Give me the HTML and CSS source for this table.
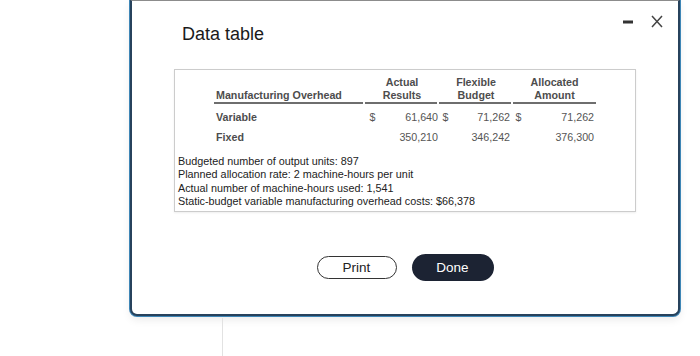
FILE: index.html
```html
<!DOCTYPE html>
<html>
<head>
<meta charset="utf-8">
<link rel="stylesheet" href="styles.css">
</head>
<body>
<div class="modal">
  <div class="modal-head">
    <h1 class="title">Data table</h1>
    <div class="controls">
      <svg class="ico-min" width="10" height="4" viewBox="0 0 10 4"><rect x="0" y="0.5" width="10" height="3" fill="#333"/></svg>
      <svg class="ico-close" width="12" height="13" viewBox="0 0 12 13"><path d="M1 1 L11 12 M11 1 L1 12" stroke="#444" stroke-width="1.5" fill="none"/></svg>
    </div>
  </div>
  <div class="data-box">
    <table class="data">
      <colgroup>
        <col class="c-label"><col class="c-dol1"><col class="c-v1"><col class="c-dol2"><col class="c-v2"><col class="c-dol3"><col class="c-v3">
      </colgroup>
      <thead>
        <tr>
          <th class="th-left">Manufacturing Overhead</th>
          <th colspan="2">Actual<br>Results</th>
          <th colspan="2">Flexible<br>Budget</th>
          <th colspan="2" class="th-last">Allocated<br>Amount</th>
        </tr>
      </thead>
      <tbody>
        <tr>
          <td class="lbl">Variable</td>
          <td class="dol">$</td>
          <td class="val v1">61,640</td>
          <td class="dol">$</td>
          <td class="val v2">71,262</td>
          <td class="dol">$</td>
          <td class="val v3">71,262</td>
        </tr>
        <tr>
          <td class="lbl">Fixed</td>
          <td class="dol"></td>
          <td class="val v1">350,210</td>
          <td class="dol"></td>
          <td class="val v2">346,242</td>
          <td class="dol"></td>
          <td class="val v3">376,300</td>
        </tr>
      </tbody>
    </table>
    <div class="notes">
      <p>Budgeted number of output units: 897</p>
      <p>Planned allocation rate: 2 machine-hours per unit</p>
      <p>Actual number of machine-hours used: 1,541</p>
      <p>Static-budget variable manufacturing overhead costs: $66,378</p>
    </div>
  </div>
  <div class="actions">
    <button class="btn btn-print">Print</button>
    <button class="btn btn-done">Done</button>
  </div>
</div>
<div class="below"></div>
</body>
</html>
```

FILE: styles.css
```css
html, body {
  margin: 0;
  padding: 0;
  background: #ffffff;
  font-family: "Liberation Sans", Arial, Helvetica, sans-serif;
}

.modal {
  box-sizing: border-box;
  margin-left: 130px;
  width: 550px;
  height: 316px;
  background: #fff;
  border: 2px solid #27425c;
  border-top: 1px solid #8c8c8c;
  border-radius: 0 0 7px 7px;
  box-shadow: 0 0 0 1px #3f86b6, 0 4px 8px rgba(0, 0, 0, 0.08);
  padding: 13px 15px 0 42px;
}

.modal-head {
  display: flex;
  justify-content: space-between;
  align-items: flex-start;
  height: 55px;
}

.title {
  margin: 9px 0 0 8px;
  font-size: 18px;
  line-height: 22px;
  font-weight: normal;
  color: #1a1a1a;
}

.controls {
  display: flex;
  align-items: center;
  gap: 18px;
  padding-top: 1px;
}

.ico-min { margin-top: 1px; }

.data-box {
  box-sizing: border-box;
  width: 462px;
  height: 143px;
  border: 1px solid #cccccc;
  box-shadow: 0 1px 2px rgba(0, 0, 0, 0.07);
  padding: 6px 0 0 3px;
}

.data {
  margin-left: 36px;
  border-collapse: collapse;
  table-layout: fixed;
  width: 382px;
  font-size: 10.7px;
  color: #555;
}

.c-label { width: 151px; }
.c-dol1 { width: 15px; }
.c-v1 { width: 59px; }
.c-dol2 { width: 13px; }
.c-v2 { width: 61px; }
.c-dol3 { width: 11px; }
.c-v3 { width: 72px; }

.data th {
  font-weight: bold;
  color: #4d4d4d;
  line-height: 13px;
  padding: 0 0 2px 0;
  vertical-align: bottom;
  text-align: center;
  white-space: nowrap;
  background: linear-gradient(#6e6e6e, #6e6e6e) no-repeat left bottom / calc(100% - 2px) 2px;
}

.data th.th-left {
  text-align: left;
  padding-left: 2px;
}

.data th.th-last {
  background-size: 100% 2px;
}

.data td {
  height: 20px;
  line-height: 20px;
  padding: 0;
  white-space: nowrap;
}

.data tbody tr:first-child td {
  padding-top: 3px;
}

.data td.lbl {
  font-weight: bold;
  color: #4d4d4d;
  padding-left: 2px;
}

.data td.dol {
  text-align: center;
}

.data td.val {
  text-align: right;
}

.data td.v1 { padding-right: 1px; }
.data td.v2 { padding-right: 3px; }
.data td.v3 { padding-right: 2px; }

.notes {
  margin-top: 8px;
  font-size: 10.8px;
  line-height: 13.3px;
  color: #222;
}

.notes p {
  margin: 0;
}

.actions {
  display: flex;
  justify-content: center;
  align-items: center;
  gap: 15px;
  margin-top: 42px;
  margin-left: -27px;
}

.btn {
  font-family: "Liberation Sans", Arial, Helvetica, sans-serif;
  font-size: 13.5px;
  border-radius: 14px;
  cursor: pointer;
}

.btn-print {
  width: 80px;
  height: 23px;
  background: #fff;
  color: #222;
  border: 1.5px solid #333;
}

.btn-done {
  width: 82px;
  height: 27px;
  background: #1c2333;
  color: #fff;
  border: none;
}

.below {
  margin-left: 222px;
  margin-top: 2px;
  height: 38px;
  border-left: 1px solid #e2e2e2;
}
```
